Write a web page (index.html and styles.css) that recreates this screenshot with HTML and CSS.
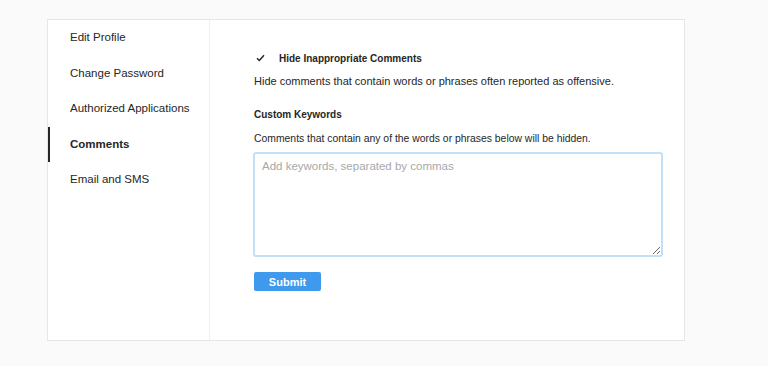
FILE: index.html
```html
<!DOCTYPE html>
<html>
<head lang="en">
    <meta charset="UTF-8">
    <title>Comments</title>
    <link rel="stylesheet" href="styles.css">
</head>
<body>
<div class="card">
    <ul class="side_nav">
        <li class="nav_item">Edit Profile</li>
        <li class="nav_item">Change Password</li>
        <li class="nav_item">Authorized Applications</li>
        <li class="nav_item active">Comments</li>
        <li class="nav_item">Email and SMS</li>
    </ul>
    <div class="main">
        <div class="check_row">
            <svg class="check" width="9" height="8" viewBox="0 0 9 8">
                <path d="M1 4.2 L3.3 6.5 L8 1.2" fill="none" stroke="#222" stroke-width="1.4"/>
            </svg>
            <span class="check_label">Hide Inappropriate Comments</span>
        </div>
        <p class="desc first">Hide comments that contain words or phrases often reported as offensive.</p>
        <h4 class="sub_title">Custom Keywords</h4>
        <p class="desc second">Comments that contain any of the words or phrases below will be hidden.</p>
        <textarea class="keywords" placeholder="Add keywords, separated by commas"></textarea>
        <div><input class="btn_submit" type="button" value="Submit"></div>
    </div>
</div>
</body>
</html>
```

FILE: styles.css
```css
body{
    margin: 0;
    background: #fafafa;
    font-family: "Liberation Sans", Arial, sans-serif;
    color: #262626;
}
.card{
    display: flex;
    width: 636px;
    height: 320px;
    margin: 19px 0 0 47px;
    background: #fff;
    border: 1px solid #e6e6e6;
}
.side_nav{
    list-style: none;
    margin: 0;
    padding: 0;
    width: 161px;
    border-right: 1px solid #efefef;
}
.nav_item{
    height: 35.5px;
    line-height: 34px;
    padding-left: 20px;
    font-size: 11.5px;
    border-left: 2px solid transparent;
}
.nav_item.active{
    font-weight: bold;
    border-left-color: #262626;
}
.main{
    flex: 1;
    padding: 29px 0 0 44px;
}
.check_row{
    display: flex;
    align-items: center;
    height: 18px;
}
.check{
    margin: 0 14px 0 2px;
}
.check_label{
    font-size: 10px;
    font-weight: bold;
}
.desc{
    margin: 6px 0 0;
    font-size: 11px;
    line-height: 16px;
}
.desc.second{
    font-size: 10.4px;
}
.sub_title{
    margin: 18px 0 0;
    font-size: 10px;
    line-height: 16px;
}
.sub_title + .desc{
    margin-top: 8px;
}
.keywords{
    display: block;
    box-sizing: border-box;
    width: 410px;
    height: 105px;
    margin: 5px 0 0 -1px;
    padding: 6px 7px;
    border: 2px solid #c3e0fa;
    border-radius: 3px;
    outline: none;
    font-family: "Liberation Sans", Arial, sans-serif;
    font-size: 11.5px;
    color: #262626;
    resize: vertical;
}
.keywords::placeholder{
    color: #a8a8a8;
}
.btn_submit{
    margin-top: 15px;
    width: 67px;
    height: 19px;
    padding: 0;
    border: none;
    border-radius: 2px;
    background: #3f99ed;
    color: #fff;
    font-family: "Liberation Sans", Arial, sans-serif;
    font-size: 11px;
    font-weight: bold;
    cursor: pointer;
}
```
